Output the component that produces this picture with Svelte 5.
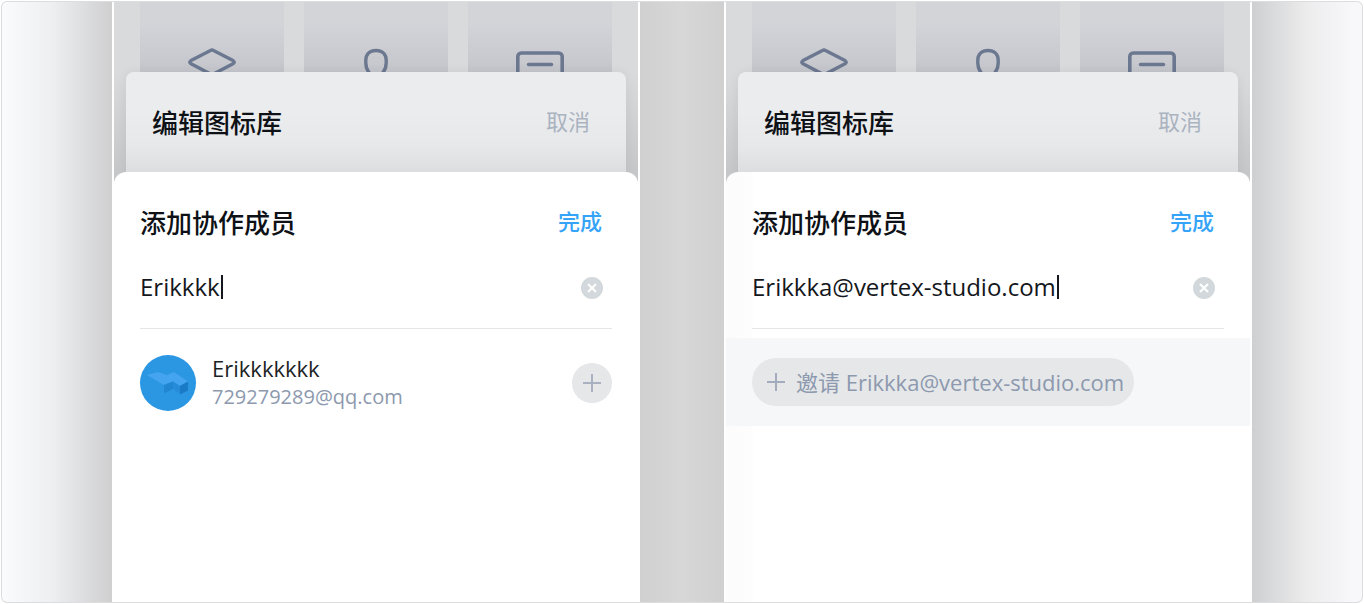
<script>
  const screens = [
    { id: 'match', query: 'Erikkkk', user: { name: 'Erikkkkkkk', mail: '729279289@qq.com' } },
    { id: 'invite', query: 'Erikkka@vertex-studio.com', user: null }
  ];
  let values = $state(screens.map((s) => s.query));
</script>

<main class="stage">
  {#each screens as screen, i (screen.id)}
    <section class="phone {screen.id}">
      <div class="backdrop">
        <div class="tiles">
          <div class="tile">
            <svg viewBox="0 0 48 48" width="48" height="48" fill="none" stroke="#6b7890" stroke-width="3.4" stroke-linejoin="round" stroke-linecap="round">
              <path d="M22.500 2.500Q24 1.600 25.500 2.500L45 12.600Q47.500 14.200 45 15.800L25.500 26Q24 26.900 22.500 26L3 15.800Q.500 14.200 3 12.600Z" />
              <path d="M2 27L24 39L46 27" />
            </svg>
          </div>
          <div class="tile">
            <svg viewBox="0 0 48 48" width="48" height="48" fill="none" stroke="#6b7890" stroke-width="3.400">
              <path d="M13.800 12.500C13.800 6 18 2.500 24 2.500S34.200 6 34.200 12.500V15C34.200 22 30 28 24 28S13.800 22 13.800 15Z" />
            </svg>
          </div>
          <div class="tile">
            <svg viewBox="0 0 48 48" width="48" height="48" fill="none" stroke="#6b7890" stroke-width="3.600" stroke-linecap="round">
              <rect x="1.800" y="5" width="44.400" height="38" rx="3.500" />
              <path d="M12.500 16.500H35.500M12.500 29H35.500" />
            </svg>
          </div>
        </div>
        <div class="sheet edit">
          <h2>编辑图标库</h2>
          <button class="action cancel" type="button">取消</button>
        </div>
      </div>

      <div class="sheet add">
        <header>
          <h2>添加协作成员</h2>
          <button class="action done" type="button">完成</button>
        </header>
        <div class="search">
          <div class="field">
            <input type="text" aria-label="添加协作成员" bind:value={values[i]} size="1" />
            <i class="caret"></i>
          </div>
          <button class="clear" type="button" aria-label="清除" onclick={() => (values[i] = '')}>
            <svg viewBox="0 0 22 22" width="22" height="22">
              <circle cx="11" cy="11" r="11" fill="#d2d8dc" />
              <path d="M7 7L15 15M15 7L7 15" stroke="#fff" stroke-width="2" />
            </svg>
          </button>
        </div>

        {#if screen.user}
          <div class="member">
            <svg class="avatar" viewBox="0 0 56 56" width="56" height="56" aria-hidden="true">
              <circle cx="28" cy="28" r="28" fill="#2b97e3" />
              <path d="M7 20L18 17L27 20L34 17L48 26.500L40 31L33 26.500L24 30Z" fill="#45a4ef" />
              <path d="M24 30L33 26.500V34L25 38L24 37Z" fill="#2086d2" />
              <path d="M33 26.500L40 31V39L33 34Z" fill="#268cd9" />
              <path d="M40 31L48 26.500V35.500L40 39.500Z" fill="#1b7ac6" />
            </svg>
            <div class="info">
              <span class="name">{screen.user.name}</span>
              <span class="mail">{screen.user.mail}</span>
            </div>
            <button class="plus" type="button" aria-label="添加">
              <svg viewBox="0 0 20 20" width="20" height="20"><path d="M10 1V19M1 10H19" stroke="#a9b1c0" stroke-width="2" /></svg>
            </button>
          </div>
        {:else}
          <div class="invite-row">
            <button class="pill" type="button">
              <svg viewBox="0 0 18 18" width="18" height="18"><path d="M9 0V18M0 9H18" stroke="#a3acbc" stroke-width="2" /></svg>
              <span>邀请 {values[i]}</span>
            </button>
          </div>
        {/if}
      </div>
    </section>
  {/each}
</main>

<style>
  :global(body) {
    background: #fff;
    font-family: 'Open Sans', 'Noto Sans CJK SC', sans-serif;
  }
  * {
    box-sizing: border-box;
  }
  button,
  input {
    border: 0;
    padding: 0;
    margin: 0;
    background: none;
    font: inherit;
    color: inherit;
    outline: none;
  }
  button {
    cursor: pointer;
  }
  svg {
    display: block;
  }
  .stage {
    display: grid;
    grid-template-columns: 110fr 528fr 84fr 528fr 110fr;
    min-height: calc(100vh - 2px);
    margin: 1px;
    border: 1px solid #dcdddf;
    border-radius: 6px;
    overflow: hidden;
    background: linear-gradient(90deg, #d0d0d1 47%, #d7d7d8 50%, #d0d0d1 53%);
  }
  .stage::before {
    content: '';
    grid-column: 1;
    grid-row: 1;
    background: linear-gradient(90deg, #fafbfd, #eeeff1 45%, #cfcfd0);
  }
  .stage::after {
    content: '';
    grid-column: 5;
    grid-row: 1;
    background: linear-gradient(270deg, #f8f8fb 8%, #ececed 50%, #cecfd0);
  }
  .phone {
    grid-row: 1;
    display: flex;
    flex-direction: column;
    min-width: 0;
    padding: 0 2px;
    background: #fff;
  }
  .match {
    grid-column: 2;
  }
  .invite {
    grid-column: 4;
  }
  .backdrop {
    height: 184px;
    overflow: hidden;
    background: linear-gradient(#d8dadb 40%, #c6c7c9 92%);
  }
  .tiles {
    display: grid;
    grid-template-columns: repeat(3, 1fr);
    gap: 20px;
    height: 70px;
    padding: 0 26px;
  }
  .tile {
    display: flex;
    justify-content: center;
    padding-top: 46px;
    background: linear-gradient(#d2d4d8 30%, #c5c6cc);
    overflow: hidden;
  }
  .tile svg {
    flex: none;
  }
  .sheet {
    position: relative;
  }
  .edit {
    display: flex;
    justify-content: space-between;
    align-items: center;
    height: 120px;
    margin: 0 12px;
    padding: 0 36px 18px 26px;
    border-radius: 8px 8px 0 0;
    background: linear-gradient(#ebecee 35%, #e7e8ea 62%, #dcddde 84%);
    box-shadow: 0 0 12px rgba(0, 0, 0, 0.06);
  }
  .add {
    flex: 1;
    margin-top: -14px;
    border-radius: 12px 12px 0 0;
    background: #fff;
  }
  .invite .add {
    background: linear-gradient(90deg, #fcfcfd, #fdfdfd 26px, #fff 27px);
  }
  h2 {
    margin: 0;
    color: #0e1116;
    font-size: 26px;
    font-weight: 500;
    line-height: 40px;
  }
  .action {
    padding-bottom: 4px;
    font-size: 22px;
    line-height: 32px;
  }
  .cancel {
    color: #aab3c0;
  }
  .done {
    color: #35a3f7;
    font-weight: 500;
  }
  header {
    display: flex;
    justify-content: space-between;
    align-items: center;
    height: 80px;
    padding: 22px 36px 0 26px;
  }
  .search {
    display: flex;
    align-items: center;
    justify-content: space-between;
    height: 77px;
    margin: 0 26px;
    padding: 0 9px 4px 0;
    border-bottom: 1px solid #e4e6e8;
    color: #14171b;
    font-size: 24px;
  }
  .field {
    display: flex;
    align-items: center;
    gap: 1px;
    min-width: 0;
    padding-bottom: 2px;
  }
  input {
    field-sizing: content;
    min-width: 0;
    height: 36px;
    line-height: 36px;
  }
  .caret {
    width: 2px;
    height: 24px;
    background: #14171b;
  }
  .member {
    display: flex;
    align-items: center;
    padding: 25px 26px;
  }
  .info {
    flex: 1;
    display: flex;
    flex-direction: column;
    gap: 1px;
    padding-left: 16px;
  }
  .name {
    color: #1c1f24;
    font-size: 22px;
    line-height: 28px;
  }
  .mail {
    color: #8d99ae;
    font-size: 20px;
    line-height: 28px;
  }
  .plus {
    display: grid;
    place-items: center;
    width: 40px;
    height: 40px;
    border-radius: 50%;
    background: #e5e7e9;
  }
  .invite-row {
    margin-top: 9px;
    padding: 20px 26px;
    background: #f6f7f9;
  }
  .pill {
    display: flex;
    align-items: center;
    gap: 11px;
    height: 48px;
    padding: 0 10px 0 15px;
    border-radius: 24px;
    background: #e5e7e9;
    color: #8d99ae;
    font-size: 22px;
    line-height: 32px;
    white-space: nowrap;
  }
</style>
